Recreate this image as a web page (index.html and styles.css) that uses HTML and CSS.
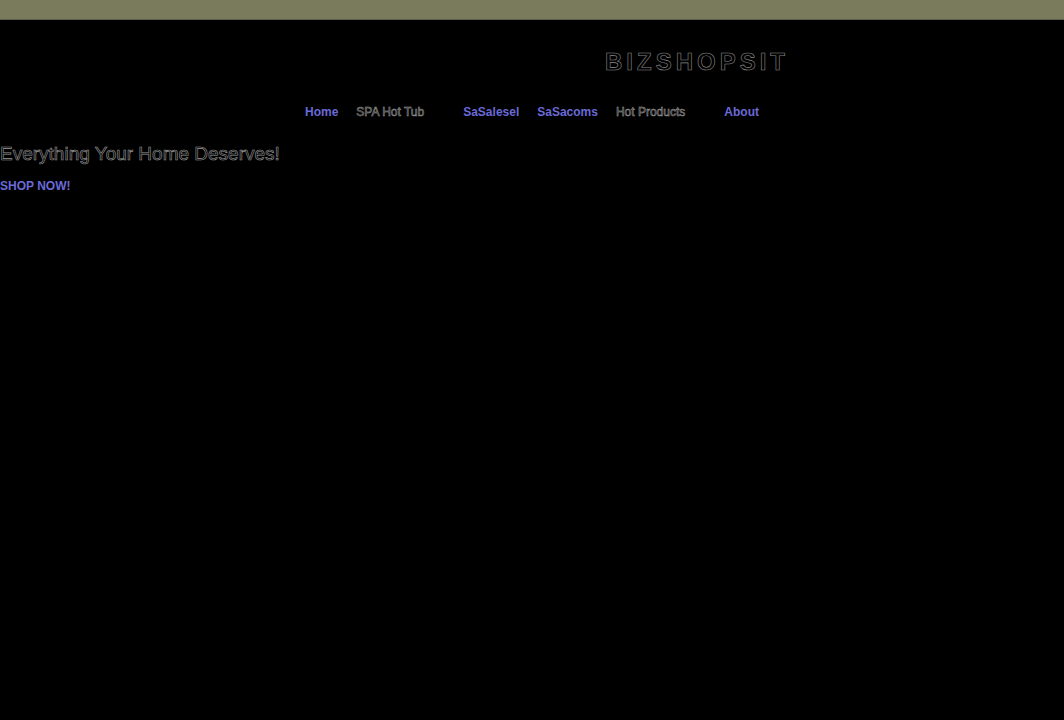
FILE: index.html
```html
<!DOCTYPE html>
<html lang="en">
<head>
    <meta charset="UTF-8">
    <meta name="viewport" content="width=device-width, initial-scale=1.0">
    <title>BIZSHOPS</title>
    <link rel="stylesheet" href="styles.css">
</head>
<body>
    <div class="topbar"></div>
    <header class="header">
        <div class="logo">BIZSHOPSIT</div>
        <nav class="nav">
            <a href="#" class="link">Home</a>
            <span class="item has-menu">SPA Hot Tub</span>
            <a href="#" class="link">SaSalesel</a>
            <a href="#" class="link">SaSacoms</a>
            <span class="item has-menu">Hot Products</span>
            <a href="#" class="link">About</a>
        </nav>
    </header>
    <section class="hero">
        <h1>Everything Your Home Deserves!</h1>
        <a href="#" class="shop">SHOP NOW!</a>
    </section>
</body>
</html>
```

FILE: styles.css
```css
body {
    margin: 0;
    background: #000;
    font-family: "Liberation Sans", Arial, sans-serif;
    color: #000;
}
.topbar {
    height: 19px;
    background: #7a7b5c;
    border-bottom: 1px solid #5e5f52;
}
.header {
    display: flex;
    flex-direction: column;
    align-items: center;
}
.logo {
    margin-top: 29px;
    padding-left: 330px;
    font-size: 24px;
    font-weight: 700;
    letter-spacing: 4px;
    line-height: 26px;
    color: #000;
    -webkit-text-stroke: 0.6px #8a8a8a;
}
.nav {
    display: flex;
    gap: 18px;
    margin-top: 30px;
    font-size: 12px;
    font-weight: 700;
    line-height: 14px;
}
.nav .link {
    color: #6a6ad8;
    text-decoration: none;
}
.nav .item {
    font-weight: 400;
    color: #1a1a1a;
    -webkit-text-stroke: 0.5px #a0a0a0;
}
.nav .has-menu {
    padding-right: 21px;
}
.hero {
    margin-top: 23px;
}
.hero h1 {
    margin: 0;
    font-size: 19px;
    font-weight: 400;
    line-height: 24px;
    color: #000;
    -webkit-text-stroke: 0.6px #9a9a9a;
}
.shop {
    display: inline-block;
    margin-top: 13px;
    font-size: 12px;
    font-weight: 700;
    color: #6a6ad8;
    text-decoration: none;
}
```
